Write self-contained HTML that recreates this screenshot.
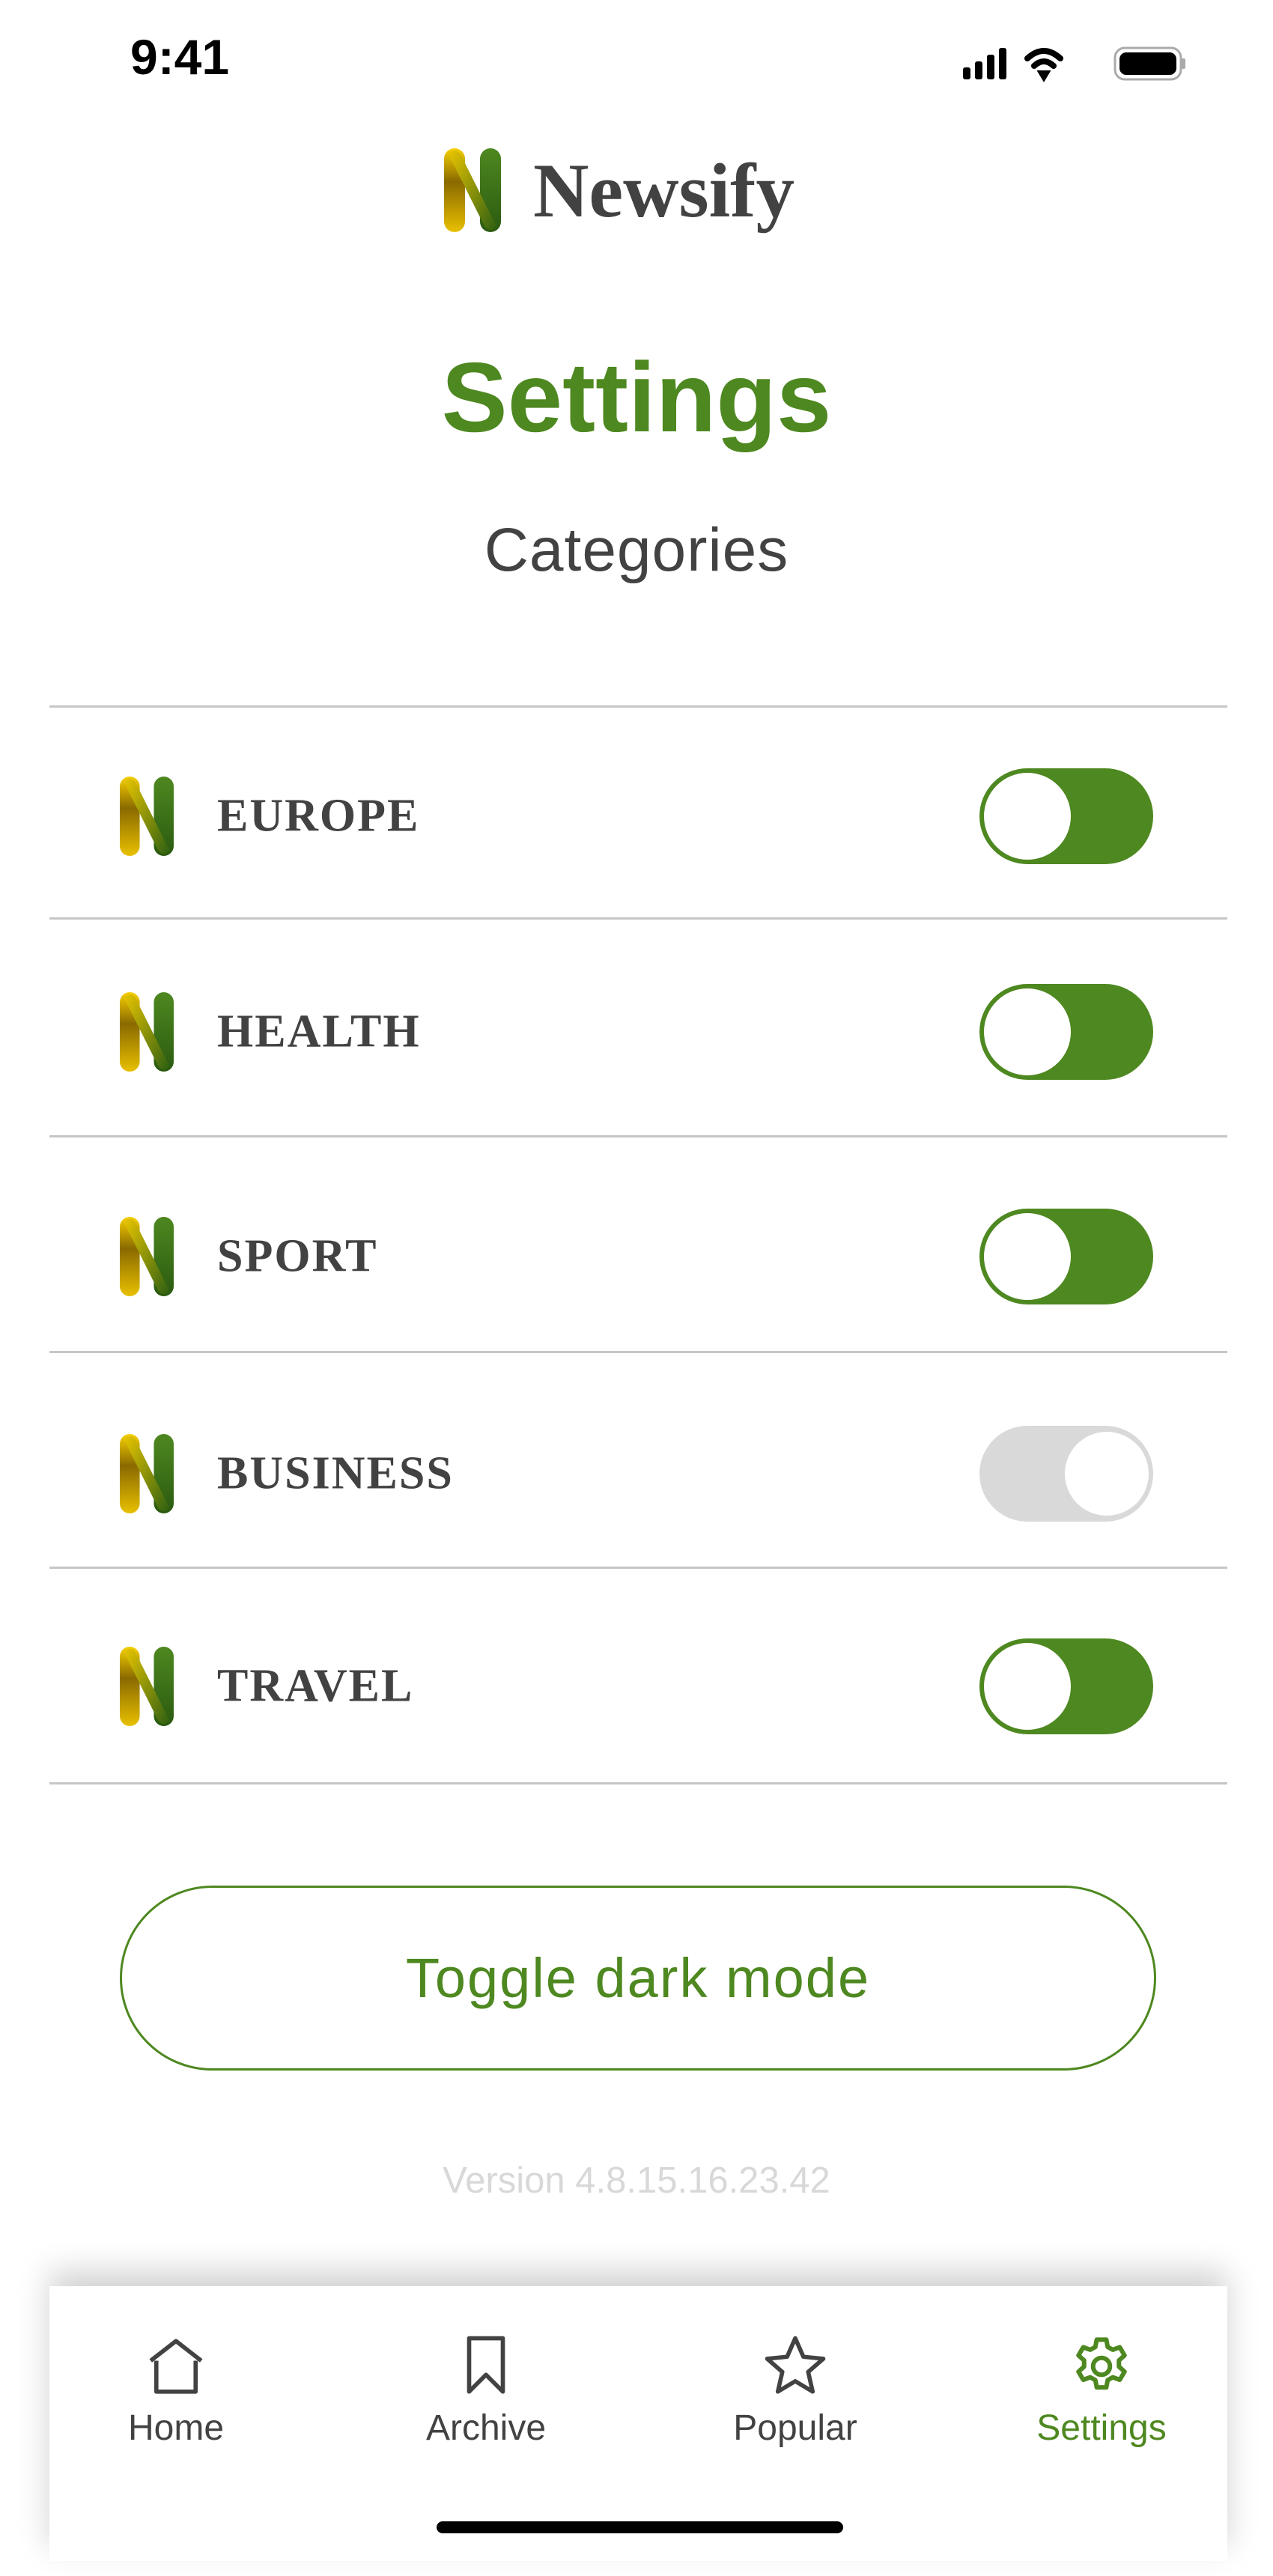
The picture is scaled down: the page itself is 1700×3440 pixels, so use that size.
<!DOCTYPE html>
<html><head><meta charset="utf-8">
<style>
*{margin:0;padding:0;box-sizing:border-box}
body{width:1700px;height:3440px;background:#fff;position:relative;overflow:hidden;font-family:"Liberation Sans",sans-serif;color:#424242}
.abs{position:absolute}
.line{position:absolute;left:66px;width:1573px;height:3px;background:#c6c6c6}
.row{position:absolute;left:0;width:1700px;height:140px}
.lab{position:absolute;left:290px;top:50%;transform:translateY(-50%);font-family:"Liberation Serif",serif;font-weight:bold;font-size:62px;letter-spacing:2px;color:#424242}
.ic{position:absolute;left:158px;top:50%;margin-top:-53px}
.tg{position:absolute;left:1308px;top:50%;margin-top:-64px;width:232px;height:128px;border-radius:64px;background:#4e8820}
.tg::after{content:"";position:absolute;left:6px;top:6px;width:116px;height:116px;border-radius:50%;background:#fff}
.tg.off{background:#d9d9d9}
.tg.off::after{left:114px;top:8px;width:112px;height:112px}
.tab{position:absolute;top:3115px;width:300px;text-align:center;font-size:48px;color:#424242}
.tab svg{display:block;margin:0 auto 10px}
</style></head><body>
<div class="abs" style="left:174px;top:38px;font-size:66px;font-weight:bold;color:#000">9:41</div>
<svg class="abs" style="left:1284px;top:60px" width="300" height="50" viewBox="0 0 300 50">
<rect x="2" y="30" width="10" height="16" rx="3" fill="#000"/><rect x="18" y="22" width="10" height="24" rx="3" fill="#000"/><rect x="34" y="13" width="10" height="33" rx="3" fill="#000"/><rect x="50" y="4" width="10" height="42" rx="3" fill="#000"/>
<path d="M88 18 Q110 -2 132 18" stroke="#000" stroke-width="8" fill="none" stroke-linecap="round"/><path d="M97 28 Q110 16 123 28" stroke="#000" stroke-width="8" fill="none" stroke-linecap="round"/><path d="M104 36 L110 46 L116 36 Z" fill="#000" stroke="#000" stroke-width="4"/>
<rect x="205" y="4" width="88" height="42" rx="13" fill="none" stroke="#aaa" stroke-width="3"/><rect x="211" y="10" width="76" height="30" rx="9" fill="#000"/><rect x="294" y="18" width="5" height="14" rx="2" fill="#aaa"/>
</svg>
<svg width="0" height="0" style="position:absolute"><defs>
<linearGradient id="gy" x1="0" y1="0" x2="0" y2="1"><stop offset="0" stop-color="#f5d000"/><stop offset="0.4" stop-color="#8a6a00"/><stop offset="1" stop-color="#e8c000"/></linearGradient>
<linearGradient id="gg" x1="0" y1="0" x2="0" y2="1"><stop offset="0" stop-color="#4e8820"/><stop offset="1" stop-color="#2b5a10"/></linearGradient>
<linearGradient id="gd" x1="0" y1="0" x2="1" y2="1"><stop offset="0" stop-color="#e8c400"/><stop offset="1" stop-color="#2e6012"/></linearGradient>
<symbol id="N" viewBox="0 0 76 112"><rect x="0" y="0" width="28" height="112" rx="14" fill="url(#gy)"/><rect x="48" y="0" width="28" height="112" rx="14" fill="url(#gg)"/><path d="M6 8 Q14 -2 22 8 L70 104 Q62 114 54 104 Z" fill="url(#gd)"/></symbol>
</defs></svg>
<svg class="abs" style="left:592px;top:198px" width="78" height="112"><use href="#N"/></svg>
<div class="abs" style="left:712px;top:196px;font-family:'Liberation Serif',serif;font-weight:bold;font-size:103px;color:#424242">Newsify</div>
<div class="abs" style="left:0;width:1700px;top:455px;text-align:center;font-size:132px;font-weight:bold;color:#4e8820">Settings</div>
<div class="abs" style="left:0;width:1700px;top:688px;text-align:center;font-size:82px;color:#424242;letter-spacing:1px">Categories</div>
<div class="line" style="top:942px"></div>
<div class="line" style="top:1225px"></div>
<div class="line" style="top:1516px"></div>
<div class="line" style="top:1804px"></div>
<div class="line" style="top:2092px"></div>
<div class="line" style="top:2380px"></div>
<div class="row" style="top:1020px"><svg class="ic" width="76" height="106"><use href="#N"/></svg><div class="lab">EUROPE</div><div class="tg"></div></div>
<div class="row" style="top:1308px"><svg class="ic" width="76" height="106"><use href="#N"/></svg><div class="lab">HEALTH</div><div class="tg"></div></div>
<div class="row" style="top:1608px"><svg class="ic" width="76" height="106"><use href="#N"/></svg><div class="lab">SPORT</div><div class="tg"></div></div>
<div class="row" style="top:1898px"><svg class="ic" width="76" height="106"><use href="#N"/></svg><div class="lab">BUSINESS</div><div class="tg off"></div></div>
<div class="row" style="top:2182px"><svg class="ic" width="76" height="106"><use href="#N"/></svg><div class="lab">TRAVEL</div><div class="tg"></div></div>
<div class="abs" style="left:160px;top:2518px;width:1384px;height:247px;border:3px solid #4e8820;border-radius:124px;text-align:center;line-height:241px;font-size:74px;letter-spacing:2px;color:#4e8820">Toggle dark mode</div>
<div class="abs" style="left:0;width:1700px;top:2884px;text-align:center;font-size:49px;color:#d8d8d8">Version 4.8.15.16.23.42</div>
<div class="abs" style="left:66px;top:3053px;width:1573px;height:367px;background:#fff;box-shadow:0 -20px 40px rgba(0,0,0,0.18)"></div>
<div class="tab" style="left:85px"><svg width="90" height="90" viewBox="0 0 24 24" fill="none" stroke="#424242" stroke-width="1.5" stroke-linejoin="round"><path d="M3 10 L12 3 L21 10 M5 10 V21 H19 V10"/></svg>Home</div>
<div class="tab" style="left:499px"><svg width="90" height="90" viewBox="0 0 24 24" fill="none" stroke="#424242" stroke-width="1.5" stroke-linejoin="round"><path d="M6 2 H18 V21 L12 15 L6 21 Z"/></svg>Archive</div>
<div class="tab" style="left:912px"><svg width="90" height="90" viewBox="0 0 24 24" fill="none" stroke="#424242" stroke-width="1.5" stroke-linejoin="round"><path d="M12 2 L14.9 8.6 L22 9.3 L16.6 14 L18.2 21 L12 17.3 L5.8 21 L7.4 14 L2 9.3 L9.1 8.6 Z"/></svg>Popular</div>
<div class="tab" style="left:1321px;color:#4e8820"><svg width="90" height="90" viewBox="0 0 24 24" fill="none" stroke="#4e8820" stroke-width="1.6" stroke-linejoin="round"><circle cx="12" cy="12" r="3"/><path d="M10.3 2.5h3.4l.5 2.6 1.8 1 2.5-.9 1.7 2.9-2 1.8v2.2l2 1.8-1.7 2.9-2.5-.9-1.8 1-.5 2.6h-3.4l-.5-2.6-1.8-1-2.5.9-1.7-2.9 2-1.8v-2.2l-2-1.8 1.7-2.9 2.5.9 1.8-1z"/></svg>Settings</div>
<div class="abs" style="left:583px;top:3367px;width:543px;height:16px;border-radius:8px;background:#000"></div>
</body></html>
